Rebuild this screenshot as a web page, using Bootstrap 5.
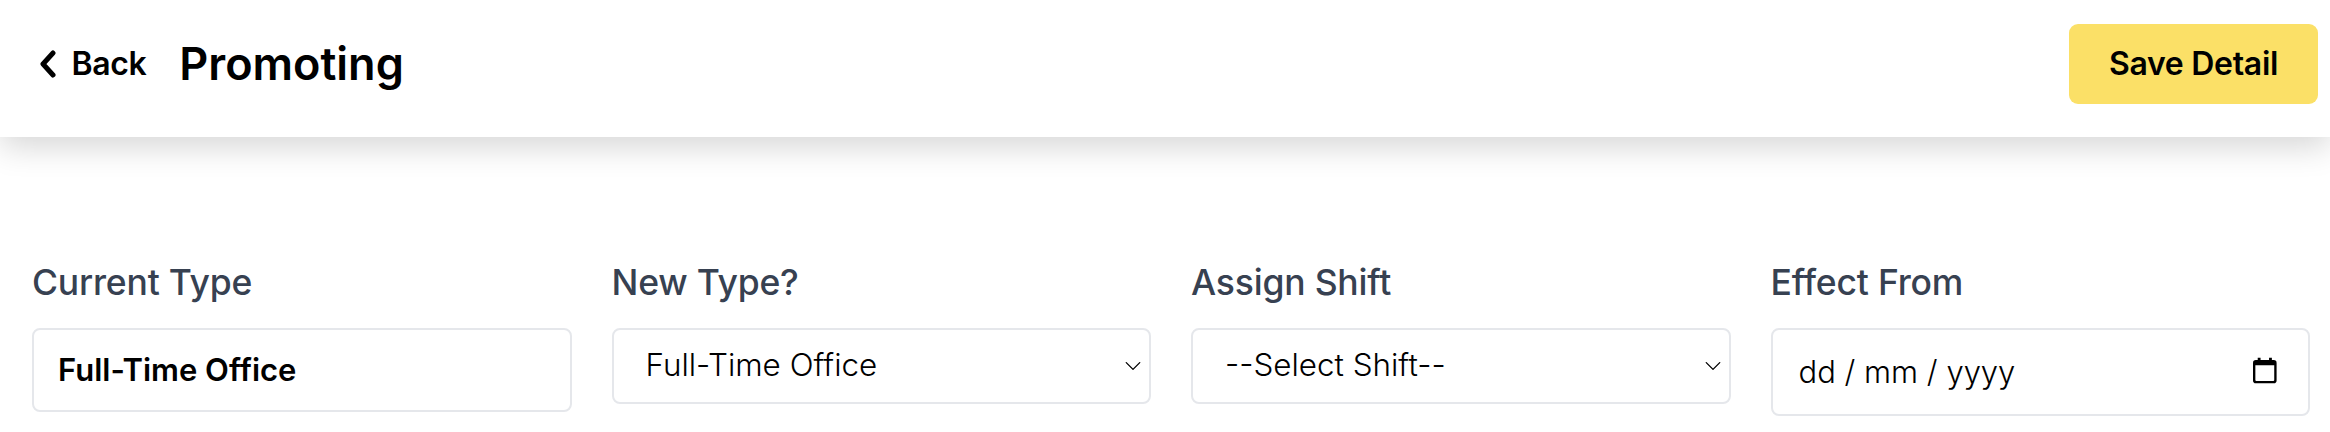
<!DOCTYPE html>
<html lang="en-GB">
<head>
<meta charset="utf-8">
<title>Promoting</title>
<link href="https://cdn.jsdelivr.net/npm/bootstrap@5.3.0/dist/css/bootstrap.min.css" rel="stylesheet">
<style>
body{background:#fff;font-family:"Inter","Liberation Sans",sans-serif;color:#000;overflow:hidden}
.topbar{height:137px;padding:0 12px 9px 38px;box-shadow:0 10px 30px rgba(0,0,0,.16);background:#fff}
.back-link{font-size:32px;font-weight:600;color:#000;text-decoration:none;gap:13.5px;letter-spacing:-.4px}
.back-link:hover{color:#000}
.page-title{font-size:45px;font-weight:600;margin:0 0 0 33px;line-height:1.2}
.save-btn{width:249px;height:80px;background:#fbe067;border:0;border-radius:9px;font-size:32px;font-weight:600;color:#000;padding:0;letter-spacing:-.3px}
.save-btn:hover{background:#fbe067;color:#000}
.form-zone{padding:124px 20px 0 32px}
.form-zone .row{--bs-gutter-x:40px}
.field-label{font-size:35.500px;font-weight:500;color:#374151;line-height:44px;margin-bottom:23px;display:block;letter-spacing:-.2px}
.field-box{border:2px solid #e5e7eb;border-radius:8px;color:#000;box-shadow:none}
.static-box{height:84px;padding:0 24px;font-size:31px;font-weight:600;display:flex;align-items:center}
.field-box.form-select{height:76px;font-size:31.400px;font-weight:300;color:#000;padding:0 32px;background-size:24px 18px;background-position:right 4px center;--bs-form-select-bg-img:url("data:image/svg+xml,%3csvg xmlns='http://www.w3.org/2000/svg' viewBox='0 0 16 16'%3e%3cpath fill='none' stroke='%23000' stroke-linecap='round' stroke-linejoin='round' stroke-width='1.2' d='m2 5 6 6 6-6'/%3e%3c/svg%3e")}
.date-box{height:88px;padding:0 31px 0 26px}
.date-input{flex:1 1 auto;min-width:0;border:0;outline:0;padding:0;font-size:31px;font-weight:300;color:#000;background:transparent}
.date-input::placeholder{color:#000;opacity:1}
.cal-icon{margin-bottom:3px}
</style>
</head>
<body>
<header class="topbar d-flex align-items-center justify-content-between">
  <div class="d-flex align-items-center">
    <a href="#" class="back-link d-flex align-items-center">
      <svg width="20" height="28" viewBox="0 0 20 28" aria-hidden="true"><path d="M15 3 5 14l10 11" fill="none" stroke="#000" stroke-width="5" stroke-linecap="round" stroke-linejoin="round"/></svg>
      <span>Back</span>
    </a>
    <h1 class="page-title">Promoting</h1>
  </div>
  <button type="button" class="btn save-btn">Save Detail</button>
</header>
<main class="form-zone">
  <div class="row">
    <div class="col-3">
      <label class="field-label">Current Type</label>
      <div class="field-box static-box">Full-Time Office</div>
    </div>
    <div class="col-3">
      <label class="field-label" for="nt">New Type?</label>
      <select id="nt" class="form-select field-box"><option>Full-Time Office</option></select>
    </div>
    <div class="col-3">
      <label class="field-label" for="as">Assign Shift</label>
      <select id="as" class="form-select field-box"><option>--Select Shift--</option></select>
    </div>
    <div class="col-3">
      <label class="field-label" for="ef">Effect From</label>
      <div class="field-box date-box d-flex align-items-center">
        <input id="ef" type="text" class="date-input" placeholder="dd / mm / yyyy">
        <svg class="cal-icon" width="25" height="27" viewBox="0 0 25 27" aria-hidden="true"><path fill-rule="evenodd" d="M5 0h3v2.500h9V0h3v2.500h2a3 3 0 0 1 3 3V24a3 3 0 0 1-3 3H3a3 3 0 0 1-3-3V5.500a3 3 0 0 1 3-3h2zM2.500 8v15.500c0 .6.400 1 1 1h18c.6 0 1-.4 1-1V8z"/></svg>
      </div>
    </div>
  </div>
</main>
</body>
</html>
